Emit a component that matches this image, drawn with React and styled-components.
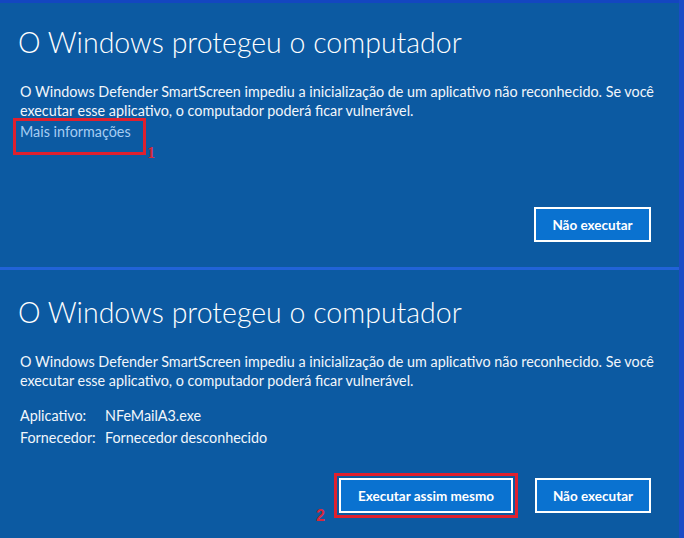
import React from 'react'
import styled, { createGlobalStyle } from 'styled-components'

const GlobalStyle = createGlobalStyle`
  html, body {
    margin: 0;
    padding: 0;
    background: #1b4bc6;
  }
  * { box-sizing: border-box; }
`

const Page = styled.div`
  width: 684px;
  height: 538px;
  display: flex;
  flex-direction: column;
  padding-right: 5px;
  font-family: Lato, "Open Sans", sans-serif;
  color: #f2f6fb;
  overflow: hidden;
`

const Panel = styled.section`
  display: flex;
  flex-direction: column;
  height: ${p => p.$height}px;
  padding: ${p => p.$top}px 8px 25px 20px;
  background: #0c5aa2;
  border-top: 3px solid ${p => p.$edge};
`

const Title = styled.h1`
  margin: 0 0 25.5px -2px;
  font-size: 28.5px;
  line-height: 28px;
  font-weight: 300;
  color: #ffffff;
  white-space: nowrap;
`

const Text = styled.p`
  margin: 0;
  font-size: 14.35px;
  line-height: 19.5px;
`

const Mark = styled.span`
  position: relative;
  display: inline-block;

  &::before {
    content: "";
    position: absolute;
    left: -7px;
    right: -15px;
    top: -3px;
    bottom: -14px;
    border: 3px solid #e0202e;
  }
`

const Number = styled.span`
  position: absolute;
  left: ${p => p.$x}px;
  top: ${p => p.$y}px;
  font-family: ${p => (p.$serif ? '"Liberation Serif", serif' : '"Liberation Sans", sans-serif')};
  font-weight: 700;
  font-size: 16px;
  line-height: 16px;
  color: #d8283a;
`

const Link = styled.span`
  color: #a6cdf2;
  font-size: 14.35px;
  line-height: 19.5px;
`

const Info = styled.div`
  display: grid;
  grid-template-columns: 85px 1fr;
  margin-top: 14px;
  font-size: 14.35px;
  line-height: 22px;
`

const Actions = styled.div`
  display: flex;
  justify-content: flex-end;
  gap: 22px;
  margin: auto 20px 0 0;
`

const Button = styled.button`
  position: relative;
  height: 35px;
  width: ${p => p.$width}px;
  padding: 0;
  background: #0a72d0;
  border: 2px solid #ffffff;
  color: #ffffff;
  font-family: Lato, "Open Sans", sans-serif;
  font-weight: 700;
  font-size: 13.5px;
  cursor: pointer;
  outline: ${p => (p.$marked ? '3px solid #e0202e' : 'none')};
  outline-offset: 2px;
`

const paragraph =
  'O Windows Defender SmartScreen impediu a inicialização de um aplicativo não reconhecido. Se você executar esse aplicativo, o computador poderá ficar vulnerável.'

export default function App() {
  return (
    <Page>
      <GlobalStyle />
      <Panel $height={267} $top={25} $edge="#1446c0">
        <Title>O Windows protegeu o computador</Title>
        <Text>{paragraph}</Text>
        <div>
          <Mark>
            <Link>Mais informações</Link>
            <Number $serif $x={127} $y={24}>1</Number>
          </Mark>
        </div>
        <Actions>
          <Button $width={117}>Não executar</Button>
        </Actions>
      </Panel>
      <Panel $height={271} $top={28} $edge="#2163d8">
        <Title>O Windows protegeu o computador</Title>
        <Text>{paragraph}</Text>
        <Info>
          <span>Aplicativo:</span>
          <span>NFeMailA3.exe</span>
          <span>Fornecedor:</span>
          <span>Fornecedor desconhecido</span>
        </Info>
        <Actions>
          <Button $width={174} $marked>
            Executar assim mesmo
            <Number $x={-25} $y={28}>2</Number>
          </Button>
          <Button $width={116}>Não executar</Button>
        </Actions>
      </Panel>
    </Page>
  )
}
